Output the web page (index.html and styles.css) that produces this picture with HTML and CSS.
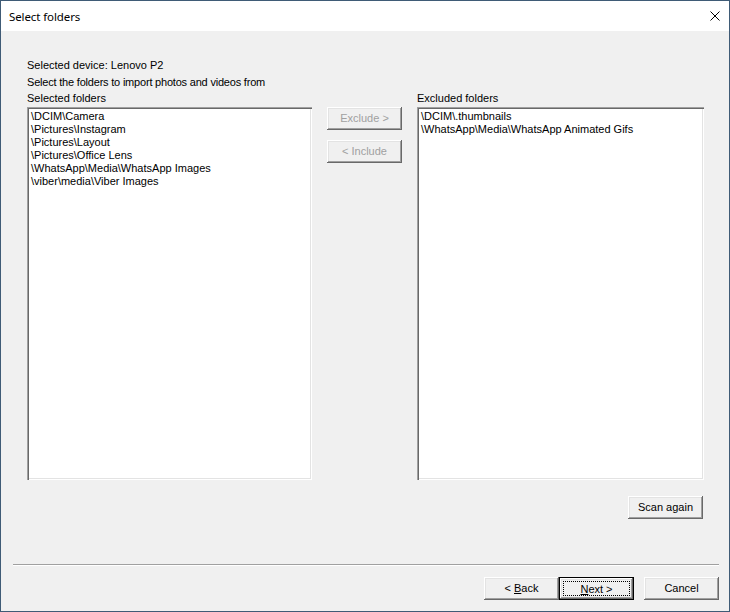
FILE: index.html
```html
<!DOCTYPE html>
<html lang="en">
<head>
    <meta charset="UTF-8">
    <title>Select folders</title>
    <link rel="stylesheet" href="styles.css">
</head>
<body>

    <div class="window">
        <div class="titlebar">
            <span class="title">Select folders</span>
            <svg class="close" width="10" height="10" viewBox="0 0 10 10">
                <path d="M0.5 0.5 L9.5 9.5 M9.5 0.5 L0.5 9.5" stroke="#000" stroke-width="1"/>
            </svg>
        </div>

        <div class="content">
            <div class="info">Selected device: Lenovo P2</div>
            <div class="info narrow">Select the folders to import photos and videos from</div>

            <div class="folders">
                <div class="label">Selected folders</div>
                <div></div>
                <div class="label">Excluded folders</div>

                <ul class="listbox">
                    <li>\DCIM\Camera</li>
                    <li>\Pictures\Instagram</li>
                    <li>\Pictures\Layout</li>
                    <li>\Pictures\Office Lens</li>
                    <li>\WhatsApp\Media\WhatsApp Images</li>
                    <li>\viber\media\Viber Images</li>
                </ul>

                <div class="move-buttons">
                    <button class="btn" disabled>Exclude &gt;</button>
                    <button class="btn" disabled>&lt; Include</button>
                </div>

                <ul class="listbox">
                    <li>\DCIM\.thumbnails</li>
                    <li>\WhatsApp\Media\WhatsApp Animated Gifs</li>
                </ul>
            </div>

            <div class="scan-row">
                <button class="btn">Scan again</button>
            </div>

            <div class="separator"></div>

            <div class="footer">
                <button class="btn">&lt; <u>B</u>ack</button>
                <button class="btn default"><span class="focus"><u>N</u>ext &gt;</span></button>
                <button class="btn cancel">Cancel</button>
            </div>
        </div>
    </div>

</body>
</html>
```

FILE: styles.css
```css
* {
    box-sizing: border-box;
    margin: 0;
    padding: 0;
}

body {
    font-family: "Liberation Sans", Arial, sans-serif;
    font-size: 11px;
    color: #000;
    background: #f0f0f0;
}

.window {
    width: 730px;
    height: 612px;
    border: 1px solid #3f5b76;
    display: flex;
    flex-direction: column;
    background: #f0f0f0;
}

.titlebar {
    height: 30px;
    background: #fff;
    display: flex;
    align-items: center;
    justify-content: space-between;
    padding: 0 9px 0 8px;
}

.title {
    font-family: "Noto Sans", sans-serif;
    font-size: 11.5px;
    letter-spacing: -0.1px;
}

.close {
    display: block;
    margin-top: -1px;
}

.content {
    flex: 1;
    display: flex;
    flex-direction: column;
    padding: 26px 10px 10px 26px;
}

.info {
    line-height: 17px;
}

.info + .info {
    line-height: 16px;
}

.narrow {
    letter-spacing: -0.2px;
}

/* Folder lists */
.folders {
    display: grid;
    grid-template-columns: 285px 75px 287px;
    grid-template-rows: 17px 373px;
    column-gap: 15px;
}

.label {
    line-height: 16px;
}

.listbox {
    list-style: none;
    background: #fff;
    padding: 3px 4px 2px;
    box-shadow: inset 1px 1px #a0a0a0, inset 2px 2px #696969,
                inset -1px -1px #fff, inset -2px -2px #e3e3e3;
}

.listbox li {
    line-height: 13px;
    white-space: nowrap;
}

.move-buttons {
    display: flex;
    flex-direction: column;
    gap: 10px;
}

/* Buttons */
.btn {
    width: 75px;
    height: 23px;
    border: none;
    background: #f0f0f0;
    font-family: inherit;
    font-size: 11px;
    color: #000;
    padding-bottom: 1px;
    box-shadow: inset -1px -1px #696969, inset 1px 1px #fff,
                inset -2px -2px #a0a0a0, inset 2px 2px #e3e3e3;
}

.btn:disabled {
    color: #a0a0a0;
}

.btn.default {
    border: 1px solid #000;
    padding: 3px;
}

.focus {
    display: block;
    height: 100%;
    line-height: 14px;
    padding-top: 1px;
    outline: 1px dotted #000;
    outline-offset: -1px;
}

.scan-row {
    display: flex;
    justify-content: flex-end;
    padding: 16px 16px 0 0;
}

.separator {
    margin: 45px 0 0 -14px;
    height: 2px;
    border-top: 1px solid #a0a0a0;
    border-bottom: 1px solid #fff;
}

.footer {
    display: flex;
    justify-content: flex-end;
    margin-top: 11px;
}

.cancel {
    margin-left: 10px;
}
```
